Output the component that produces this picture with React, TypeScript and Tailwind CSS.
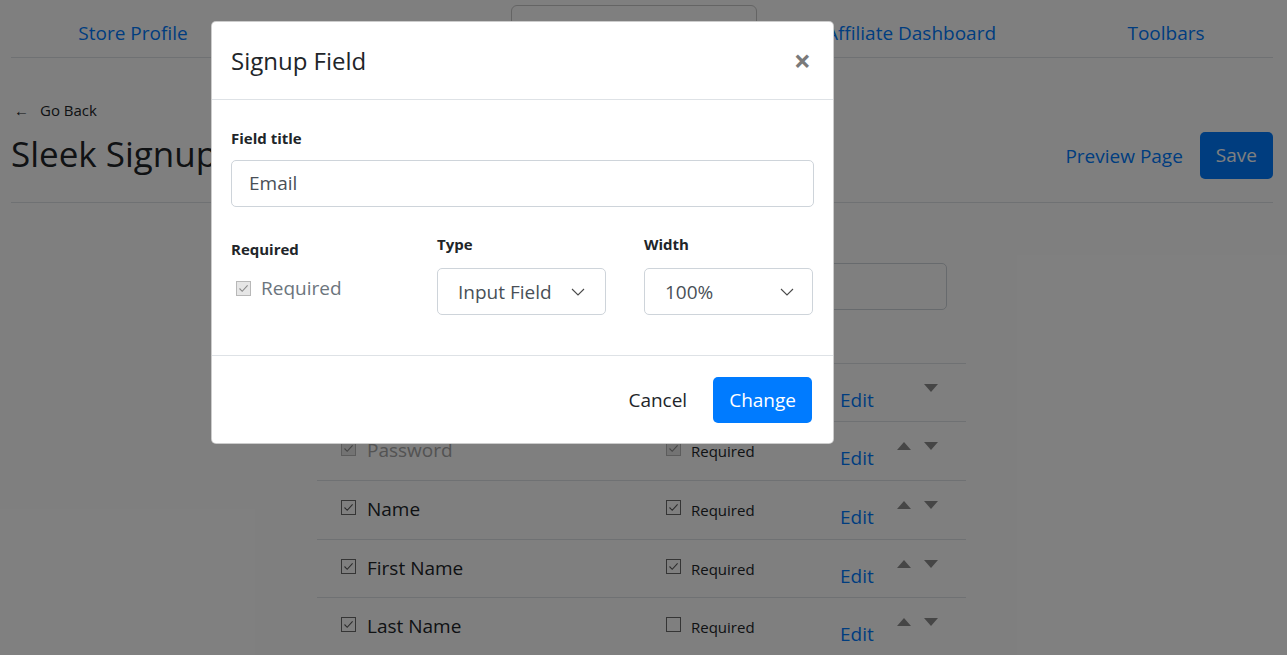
import React from 'react';

const FONT = { fontFamily: '"Open Sans", "Noto Sans", sans-serif' };

// Native-looking checkbox (Windows style)
function Box({ checked, disabled }: { checked: boolean; disabled?: boolean }) {
  return (
    <span
      className={`flex h-[15px] w-[15px] shrink-0 items-center justify-center border ${
        disabled ? 'border-[#b8b8b8] bg-[#e6e6e6]' : 'border-[#6a6a6a] bg-white'
      }`}
    >
      {checked && (
        <svg width="13" height="13" viewBox="0 0 13 13">
          <path d="M2.5 6.5 L5.2 9.3 L10.6 3.4" fill="none" stroke={disabled ? '#8a8a8a' : '#5a5a5a'} strokeWidth="1.1" />
        </svg>
      )}
    </span>
  );
}

function Chevron() {
  return (
    <svg width="14" height="8" viewBox="0 0 14 8">
      <path d="M1 1 L7 7 L13 1" fill="none" stroke="#4a4a4a" strokeWidth="1.1" />
    </svg>
  );
}

function Tri({ up, hidden }: { up?: boolean; hidden?: boolean }) {
  return (
    <svg width="14" height="8" viewBox="0 0 14 8" className={hidden ? 'invisible' : ''}>
      <polygon points={up ? '0,8 7,0 14,8' : '0,0 14,0 7,8'} fill="#8c8c8c" />
    </svg>
  );
}

type Field = { name: string; on: boolean; req: boolean; locked?: boolean; first?: boolean };

const fields: Field[] = [
  { name: 'Email', on: true, req: true, locked: true, first: true },
  { name: 'Password', on: true, req: true, locked: true },
  { name: 'Name', on: true, req: true },
  { name: 'First Name', on: true, req: true },
  { name: 'Last Name', on: true, req: false },
];

function FieldRow({ f }: { f: Field }) {
  return (
    <div className="box-border flex h-[58.67px] items-start border-t border-[#dee2e6] pl-[24px]">
      <div className="mt-[19px]">
        <Box checked={f.on} disabled={f.locked} />
      </div>
      <span className={`ml-[11px] mt-[14px] w-[299px] text-[19px] leading-[28px] ${f.locked ? 'text-[#a6a6a6]' : 'text-[#212529]'}`}>
        {f.name}
      </span>
      <div className="mt-[19px]">
        <Box checked={f.req} disabled={f.locked} />
      </div>
      <span className="ml-[10px] mt-[17px] w-[149px] text-[15px] leading-[24px] text-[#212529]">Required</span>
      <a className="mt-[22px] w-[57px] text-[19px] leading-[28px] text-[#007bff]">Edit</a>
      <div className="mt-[20px] flex gap-[13px]">
        <Tri up hidden={f.first} />
        <Tri />
      </div>
    </div>
  );
}

function Page() {
  return (
    <div className="pl-[11px] pr-[14px]">
      <nav className="flex h-[58px] items-start border-b border-[#dee2e6]">
        <div className="w-[244px] pt-[18px] text-center text-[19px] leading-[30px] text-[#007bff]">Store Profile</div>
        <div className="w-[250px] pt-[18px] text-center text-[19px] leading-[30px] text-[#007bff]">Signup Pages</div>
        <div className="flex w-[258px] justify-center pt-[5px]">
          <div className="h-[46px] w-[246px] rounded-[6px] border border-[#c8c8c8]" />
        </div>
        <div className="w-[296px] pt-[18px] text-center text-[19px] leading-[30px] text-[#007bff]">Affiliate Dashboard</div>
        <div className="w-[214px] pt-[18px] text-center text-[19px] leading-[30px] text-[#007bff]">Toolbars</div>
      </nav>

      <div className="border-b border-[#dee2e6] pb-[23px]">
        <div className="mt-[40px] flex items-center gap-[11px] pl-[3px] text-[15px] leading-[24px] text-[#212529]">
          <span>←</span>
          <span>Go Back</span>
        </div>
        <div className="mt-[7px] flex items-center justify-between">
          <h1 className="text-[35px] leading-[48px] font-normal text-[#212529]">Sleek Signup Page</h1>
          <div className="flex items-center gap-[17px] pt-[3px]">
            <a className="text-[19px] leading-[30px] text-[#007bff]">Preview Page</a>
            <button className="h-[47px] rounded-[5px] bg-[#007bff] px-[16px] text-[19px] text-white">Save</button>
          </div>
        </div>
      </div>

      <div className="ml-[306px] w-[649px] pt-[27px]">
        <div className="text-[16px] leading-[24px] font-bold text-[#212529]">Page Title</div>
        <div className="mt-[9px] h-[47px] w-[630px] rounded-[5px] border border-[#ced4da]" />
        <div className="mt-[52.67px]">
          {fields.map((f) => (
            <FieldRow key={f.name} f={f} />
          ))}
        </div>
      </div>
    </div>
  );
}

function Modal() {
  return (
    <div className="absolute left-[211px] top-[21px] w-[623px] rounded-[5px] border border-black/20 bg-white">
      <div className="flex h-[78px] items-center justify-between border-b border-[#dee2e6] pl-[19px] pr-[22px]">
        <h5 className="text-[24px] leading-[32px] font-normal text-[#212529]">Signup Field</h5>
        <span className="text-[30px] leading-none font-bold text-[#7a7a7a]">×</span>
      </div>

      <div className="px-[19px] pb-[40px] pt-[26px]">
        <div className="text-[15px] leading-[24px] font-bold text-[#212529]">Field title</div>
        <div className="mt-[10px] flex h-[47px] items-center rounded-[5px] border border-[#ced4da] pl-[17px] text-[19px] text-[#495057]">
          Email
        </div>

        <div className="mt-[25px] flex">
          <div className="w-[206px] pt-[5px]">
            <div className="text-[15px] leading-[24px] font-bold text-[#212529]">Required</div>
            <div className="mt-[13px] flex items-center gap-[10px] pl-[5px]">
              <Box checked disabled />
              <span className="text-[19px] leading-[28px] text-[#6c757d]">Required</span>
            </div>
          </div>
          <div className="w-[207px]">
            <div className="text-[15px] leading-[24px] font-bold text-[#212529]">Type</div>
            <div className="mt-[12px] flex h-[47px] w-[169px] items-center justify-between rounded-[5px] border border-[#ced4da] pl-[20px] pr-[20px] text-[19px] text-[#495057]">
              <span className="pt-[2px]">Input Field</span>
              <Chevron />
            </div>
          </div>
          <div className="w-[169px]">
            <div className="text-[15px] leading-[24px] font-bold text-[#212529]">Width</div>
            <div className="mt-[12px] flex h-[47px] w-[169px] items-center justify-between rounded-[5px] border border-[#ced4da] pl-[20px] pr-[18px] text-[19px] text-[#495057]">
              <span className="pt-[2px]">100%</span>
              <Chevron />
            </div>
          </div>
        </div>
      </div>

      <div className="flex items-center justify-end gap-[10px] border-t border-[#dee2e6] pb-[20px] pl-[21px] pr-[21px] pt-[21px]">
        <button className="h-[46px] px-[16px] text-[19px] text-[#212529]">Cancel</button>
        <button className="h-[46px] rounded-[5px] bg-[#007bff] px-[16px] text-[19px] text-white">Change</button>
      </div>
    </div>
  );
}

export default function App() {
  return (
    <div className="relative h-[655px] w-full overflow-hidden bg-white" style={FONT}>
      <Page />
      <div className="absolute inset-0 bg-black/50" />
      <Modal />
    </div>
  );
}
